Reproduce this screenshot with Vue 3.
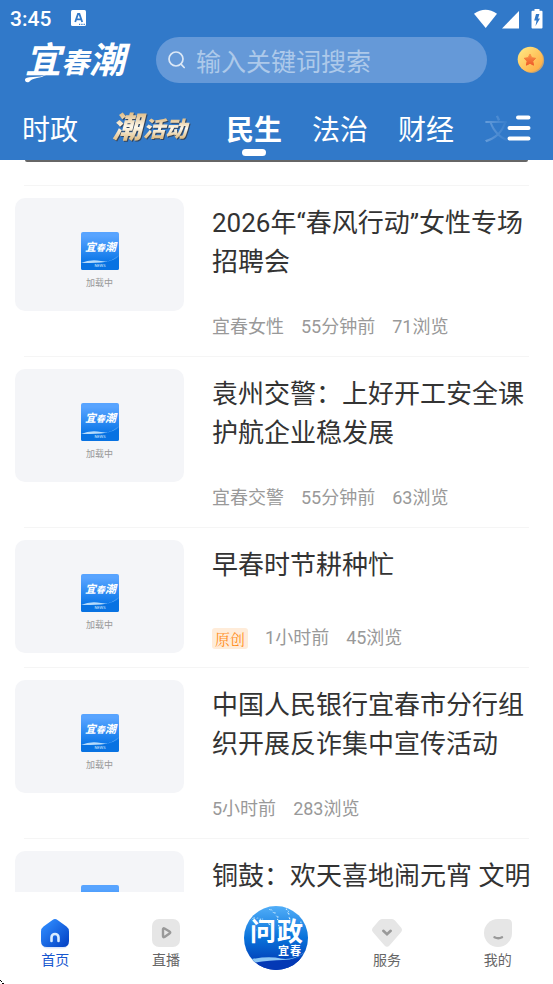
<script setup>
import { ref } from 'vue'

const keyword = ref('')

const tabs = [
  { label: '时政' },
  { label: '潮活动', art: true },
  { label: '民生', active: true },
  { label: '法治' },
  { label: '财经' },
  { label: '文', clipped: true },
]

const articles = [
  { title: '2026年“春风行动”女性专场招聘会', meta: ['宜春女性', '55分钟前', '71浏览'] },
  { title: '袁州交警：上好开工安全课护航企业稳发展', meta: ['宜春交警', '55分钟前', '63浏览'] },
  { title: '早春时节耕种忙', tag: '原创', meta: ['1小时前', '45浏览'] },
  { title: '中国人民银行宜春市分行组织开展反诈集中宣传活动', meta: ['5小时前', '283浏览'] },
  { title: '铜鼓：欢天喜地闹元宵 文明', meta: [] },
]

// Spray dots over the upper part of the round badge
const dots = Array.from({ length: 160 }, (_, i) => {
  const a = (i * 137.5 * Math.PI) / 180
  const r = 31 * Math.sqrt(((i * 29) % 160) / 160)
  return { x: 32 + r * Math.cos(a), y: 32 + r * Math.sin(a), s: 0.3 + (i % 3) * 0.2 }
}).filter((d) => d.y < 24)
</script>

<template>
  <div class="page">
    <header class="header">
      <div class="status">
        <span class="time">3:45</span>
        <svg class="status-app" width="15" height="17" viewBox="0 0 15 17">
          <rect x="0" y="0" width="15" height="16" rx="1.5" fill="#fff" />
          <path d="M4.2 12 7 4h1.4l2.8 8M5.3 9.3h4.8" fill="none" stroke="#3179c9" stroke-width="1.8" />
          <path d="M8 14.3h1.2M10.3 14.3h1.2M12.6 14.3h1.2" stroke="#3179c9" stroke-width="1.2" />
        </svg>
        <svg class="status-icons" width="70" height="20" viewBox="0 0 70 20">
          <path d="M0 4.800Q11.500-3.200 23 4.800L11.700 19z" fill="#fff" />
          <path d="M28 19.500 45 2v17.500z" fill="#fff" />
          <path d="M58.500 1.800h2V0h5v1.800h2q1 0 1 1v15.700q0 1-1 1h-9q-1 0-1-1V2.800q0-1 1-1z" fill="#fff" />
          <path d="M62 5h3.400l-1.400 4.500h2L61.500 17l1-5.500h-2.300z" fill="#3179c9" />
        </svg>
      </div>

      <div class="toolbar">
        <svg class="logo" width="106" height="46" viewBox="0 0 106 46" role="img" aria-label="宜春潮">
          <g class="brush" fill="#fff">
            <text x="1" y="36" font-size="36">宜</text>
            <text x="37" y="36" font-size="28">春</text>
            <text x="65" y="36" font-size="36">潮</text>
          </g>
          <path d="M1 42.500Q1 40 9 40T23 37.500Q19 40 13 41T5 45Q1 46 1 42.500z" fill="#fff" />
        </svg>
        <form class="search" @submit.prevent>
          <svg width="18" height="18" viewBox="0 0 18 18" fill="none" stroke="#dce8f6" stroke-width="1.700" stroke-linecap="round">
            <circle cx="8" cy="8" r="7" />
            <path d="m13 13.200 3.200 3.300" />
          </svg>
          <input v-model="keyword" type="search" aria-label="搜索" placeholder="输入关键词搜索" />
        </form>
        <button class="plain" type="button" aria-label="积分">
          <svg width="28" height="28" viewBox="0 0 28 28">
            <defs>
              <linearGradient id="coin" x1="0" y1="0" x2="1" y2="1">
                <stop offset="0" stop-color="#ffec87" />
                <stop offset="1" stop-color="#ffa53c" />
              </linearGradient>
              <linearGradient id="star" x1="0" y1="0" x2="0" y2="1">
                <stop offset="0" stop-color="#f99548" />
                <stop offset="1" stop-color="#ee5a29" />
              </linearGradient>
            </defs>
            <circle cx="14.600" cy="14.400" r="12.500" fill="#c8a470" />
            <circle cx="13.300" cy="13.300" r="12.600" fill="url(#coin)" />
            <path d="m13 8 1.700 3.700 4 .6-2.900 2.900.7 4-3.500-1.900-3.600 1.900.7-4-2.900-2.900 4-.6z" fill="url(#star)" stroke="url(#star)" stroke-linejoin="round" />
          </svg>
        </button>
      </div>

      <div class="tabbar">
        <nav class="tabs">
          <a v-for="t in tabs" :key="t.label" href="#" class="tab" :class="{ active: t.active, clipped: t.clipped }">
            <svg v-if="t.art" class="art" width="88" height="40" viewBox="0 0 88 40" role="img" aria-label="潮活动">
              <defs>
                <linearGradient id="gold" x1="0" y1="0" x2="0" y2="1">
                  <stop offset="0.200" stop-color="#dcb880" />
                  <stop offset="0.550" stop-color="#fff9ec" />
                  <stop offset="0.850" stop-color="#dfbd84" />
                </linearGradient>
              </defs>
              <g class="brush gilded" fill="url(#gold)">
                <text x="4" y="27" font-size="30">潮</text>
                <text x="35" y="26" font-size="22">活动</text>
              </g>
            </svg>
            <span v-else>{{ t.label }}</span>
          </a>
        </nav>
        <button class="plain menu" type="button" aria-label="全部频道">
          <svg width="24" height="26" viewBox="0 0 24 26" stroke="#fff" stroke-width="4" stroke-linecap="round">
            <path d="M11 2.500h10.500M2.500 13h19M2.500 23.500h19" />
          </svg>
        </button>
      </div>
    </header>

    <main class="list">
      <div class="banner-edge"></div>
      <article v-for="a in articles" :key="a.title" class="row">
        <div class="thumb">
          <svg width="38" height="38" viewBox="0 0 38 38" role="img" aria-label="宜春潮">
            <defs>
              <linearGradient id="tile" x1="0" y1="0" x2="0" y2="1">
                <stop offset="0.100" stop-color="#58a4ff" />
                <stop offset="0.800" stop-color="#0a76e8" />
              </linearGradient>
            </defs>
            <rect width="38" height="38" rx="2" fill="url(#tile)" />
            <path d="M0 31Q9 28 20 29.500T38 25V36q0 2-2 2H2q-2 0-2-2z" fill="#0872e2" />
            <path d="M0 31Q9 27 20 29T38 23Q31 30 20 30.500T0 31z" fill="#b5dafb" />
            <g class="brush" fill="#fff">
              <text x="4" y="19" font-size="11">宜</text>
              <text x="15" y="19" font-size="9">春</text>
              <text x="24" y="19" font-size="11">潮</text>
            </g>
            <text class="news" x="19" y="35" font-size="4" text-anchor="middle" fill="#d8eaff">NEWS</text>
          </svg>
          <span>加载中</span>
        </div>
        <div class="body">
          <h2>{{ a.title }}</h2>
          <p class="meta">
            <span v-if="a.tag" class="tag">{{ a.tag }}</span>
            <span v-for="m in a.meta" :key="m">{{ m }}</span>
          </p>
        </div>
      </article>
    </main>

    <nav class="bottom">
      <a href="#" class="item on">
        <svg width="32" height="32" viewBox="0 0 32 32">
          <defs>
            <linearGradient id="home" x1="0" y1="0" x2="1" y2="1">
              <stop offset="0.100" stop-color="#2f8cff" />
              <stop offset="0.900" stop-color="#0646c8" />
            </linearGradient>
          </defs>
          <path d="M3 12v13q0 5.500 6 5.500h14q6 0 6-5.500V12z" fill="#dce6fa" />
          <path d="M13.500 1.900q2.500-1.700 5 0l9 6.600q2.500 1.800 2.500 5V23q0 6-6 6H8q-6 0-6-6v-9.500q0-3.200 2.500-5z" fill="url(#home)" />
          <path d="M12.500 23v-3.500a3.500 3.500 0 0 1 7 0V23" fill="none" stroke="#d9ecff" stroke-width="2.600" stroke-linecap="round" />
        </svg>
        <span>首页</span>
      </a>
      <a href="#" class="item">
        <svg width="32" height="32" viewBox="0 0 32 32">
          <rect x="2" y="1" width="28" height="28" rx="7" fill="#e6e6e6" />
          <path d="M13 11.500q0-1.700 1.500-1l5 3q1.500 1 0 2l-5 3.500q-1.500.7-1.500-1z" fill="none" stroke="#999" stroke-width="2.400" stroke-linejoin="round" />
        </svg>
        <span>直播</span>
      </a>
      <a href="#" class="item center" aria-label="问政宜春">
        <svg width="64" height="64" viewBox="0 0 64 64">
          <defs>
            <linearGradient id="sky" x1="0" y1="0" x2="0" y2="1">
              <stop offset="0" stop-color="#51aef8" />
              <stop offset="0.500" stop-color="#0972da" />
              <stop offset="1" stop-color="#0031ae" />
            </linearGradient>
            <clipPath id="disc"><circle cx="32" cy="32" r="32" /></clipPath>
          </defs>
          <g clip-path="url(#disc)">
            <rect width="64" height="64" fill="url(#sky)" />
            <circle v-for="(d, i) in dots" :key="i" :cx="d.x" :cy="d.y" :r="d.s" fill="#d4efff" />
            <path d="M8 54Q28 50 42 53T64 46V64H0z" fill="#0439b5" />
            <path d="M8 53Q25 50 37 52.500T64 44Q52 54 39 54T8 57z" fill="#8cc6f4" />
          </g>
          <g fill="#fff" class="round-text">
            <text x="6" y="35" font-size="26">问</text>
            <text x="33" y="35" font-size="26">政</text>
            <text x="34" y="49" font-size="11">宜</text>
            <text x="46" y="49" font-size="11">春</text>
          </g>
        </svg>
      </a>
      <a href="#" class="item">
        <svg width="32" height="32" viewBox="0 0 32 32">
          <path d="M8 2.500q1.200-1.500 3-1.500h10q1.800 0 3 1.500l6 7q2 2.500 0 4.700L18.500 27.500q-2.500 2.700-5 0L2 14.200Q0 12 2 9.500z" fill="#e6e6e6" />
          <path d="m12.300 12.800 3.700 3.500 3.700-3.500" fill="none" stroke="#999" stroke-width="2.600" stroke-linecap="round" />
        </svg>
        <span>服务</span>
      </a>
      <a href="#" class="item">
        <svg width="32" height="32" viewBox="0 0 32 32">
          <path d="M16 1h9q5 0 5 5v9a14 14 0 1 1-14-14z" fill="#e6e6e6" />
          <path d="M12.500 19.300q3.800 2 7.500 0" fill="none" stroke="#999" stroke-width="2.400" stroke-linecap="round" />
        </svg>
        <span>我的</span>
      </a>
    </nav>
    <svg class="corner" width="4" height="4" viewBox="0 0 4 4">
      <path d="M0 0h1v1h1v1H1V1H0zM2 3h2v1H2z" fill="#000" />
    </svg>
  </div>
</template>

<style>
body {
  background: #fff;
}
</style>

<style scoped>
.page {
  position: relative;
  display: flex;
  flex-direction: column;
  height: 100vh;
  overflow: hidden;
  font-family: Roboto, "Noto Sans CJK SC", sans-serif;
  color: #333;
  background: #fff;
}
a {
  color: inherit;
  text-decoration: none;
}
.plain {
  display: flex;
  padding: 0;
  border: 0;
  background: none;
}
.header {
  flex: none;
  color: #fff;
  background: #3179c9;
}
.status {
  display: flex;
  align-items: center;
  height: 37px;
  padding: 0 9px 0 10px;
}
.time {
  font-size: 21px;
  font-weight: 500;
}
.status-app {
  margin-left: 20px;
}
.status-icons {
  margin-left: auto;
}
.toolbar {
  display: flex;
  align-items: center;
  padding: 0 8px 0 24px;
}
.logo {
  flex: none;
  margin-right: 26px;
  overflow: visible;
}
.brush {
  font-family: "Noto Sans CJK SC", sans-serif;
  font-style: italic;
  font-weight: 700;
}
.gilded {
  font-weight: 900;
  filter: drop-shadow(1px 1px 0 #35455c);
}
.search {
  display: flex;
  flex: 1;
  align-items: center;
  gap: 10px;
  min-width: 0;
  height: 46px;
  margin-right: 30px;
  padding: 0 12px;
  border-radius: 23px;
  background: #6599d8;
  box-sizing: border-box;
}
.search svg {
  flex: none;
}
.search input {
  flex: 1;
  min-width: 0;
  padding: 5px 0 0;
  border: 0;
  outline: 0;
  font: inherit;
  font-size: 25px;
  line-height: 36px;
  color: #fff;
  background: none;
}
.search input::placeholder {
  color: #adc9ea;
  opacity: 1;
}
.tabbar {
  display: flex;
  align-items: flex-start;
  padding: 28px 22px 0;
}
.tabs {
  display: flex;
  flex: 1;
  gap: 30px;
  min-width: 0;
  height: 49px;
  overflow: hidden;
}
.tab {
  flex: none;
  font-size: 28px;
  line-height: 40px;
}
.art {
  display: block;
}
.active {
  font-weight: 700;
}
.active::after {
  display: block;
  width: 24px;
  height: 7px;
  margin: -2px auto 0;
  border-radius: 4px;
  background: #fff;
  content: "";
}
.clipped {
  color: transparent;
  background: linear-gradient(90deg, #6a9fdb, #3179c9 26px);
  background-clip: text;
}
.menu {
  margin-top: 4px;
}
.list {
  flex: 1;
  min-height: 0;
  overflow: hidden;
}
.banner-edge {
  height: 2px;
  margin: 0 25px 23px;
  border-radius: 0 0 3px 3px;
  background: #666;
}
.row {
  display: grid;
  grid-template-columns: 169px 1fr;
  gap: 12px 28px;
  padding: 0 15px 13px;
}
.row::before {
  grid-column: 1 / -1;
  height: 1px;
  margin: 0 9px;
  background: #f5f5f5;
  content: "";
}
.thumb {
  display: flex;
  flex-direction: column;
  align-items: center;
  gap: 7px;
  height: 113px;
  padding-top: 34px;
  border-radius: 10px;
  background: #f4f5f8;
  box-sizing: border-box;
}
.thumb span {
  font-size: 9px;
  line-height: 12px;
  color: #999;
}
.news {
  font-family: Roboto, sans-serif;
}
.body {
  display: flex;
  flex-direction: column;
  justify-content: space-between;
  gap: 32px;
  min-width: 0;
  min-height: 114px;
  padding: 6px 0 3px;
  box-sizing: border-box;
}
h2 {
  margin: 0;
  font-size: 26px;
  font-weight: 400;
  line-height: 39px;
}
.meta {
  display: flex;
  align-items: center;
  gap: 17px;
  height: 26px;
  margin: 0;
  font-size: 18px;
  line-height: 26px;
  color: #999;
}
.tag {
  padding: 0 3px;
  border-radius: 3px;
  font-family: "Noto Serif CJK SC", "Noto Sans CJK SC", serif;
  font-size: 15px;
  line-height: 21px;
  color: #ff8c1a;
  background: #ffecd9;
}
.bottom {
  display: grid;
  flex: none;
  grid-template-columns: repeat(5, 1fr);
  height: 92px;
  background: #fff;
}
.item {
  display: flex;
  flex-direction: column;
  align-items: center;
  padding-top: 26px;
  font-size: 14px;
  line-height: 20px;
}
.item span {
  color: #666;
}
.on span {
  color: #1757cf;
}
.center {
  padding-top: 14px;
}
.round-text {
  font-family: "Noto Sans CJK SC", sans-serif;
  font-weight: 700;
}
.corner {
  position: absolute;
  bottom: 0;
  left: 0;
}
</style>
